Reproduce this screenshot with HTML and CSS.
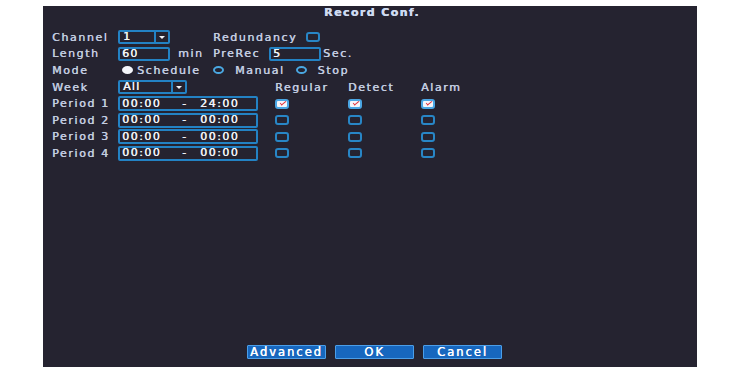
FILE: index.html
```html
<!DOCTYPE html>
<html lang="en">
<head>
    <meta charset="UTF-8">
    <meta name="viewport" content="width=device-width, initial-scale=1.0">
    <link rel="stylesheet" href="styles.css">
    <title>Record Conf.</title>
</head>
<body>
    <div class="panel">
        <div class="panel-title">Record Conf.</div>

        <div class="form-top">
            <div class="cell">Channel</div>
            <div class="cell">
                <div class="select select-channel">
                    <span class="select-value">1</span>
                    <span class="select-arrow"></span>
                </div>
            </div>
            <div class="cell">
                <span>Redundancy</span>
                <span class="check check-gap"></span>
            </div>

            <div class="cell">Length</div>
            <div class="cell">
                <div class="input input-short">60</div>
                <span class="unit-min">min</span>
            </div>
            <div class="cell">
                <span>PreRec</span>
                <div class="input input-short input-prerec">5</div>
                <span class="unit-sec">Sec.</span>
            </div>

            <div class="cell">Mode</div>
            <div class="cell">
                <span class="radio radio-on"></span>
                <span class="radio-label-tight">Schedule</span>
            </div>
            <div class="cell">
                <span class="radio"></span>
                <span class="radio-label">Manual</span>
                <span class="radio radio-next"></span>
                <span class="radio-label">Stop</span>
            </div>
        </div>

        <div class="form-periods">
            <div class="cell">Week</div>
            <div class="cell">
                <div class="select select-week">
                    <span class="select-value">All</span>
                    <span class="select-arrow"></span>
                </div>
            </div>
            <div class="cell">Regular</div>
            <div class="cell">Detect</div>
            <div class="cell">Alarm</div>

            <div class="cell">Period 1</div>
            <div class="cell">
                <div class="input input-period">
                    <span class="time-from">00:00</span><span class="time-dash">-</span><span>24:00</span>
                </div>
            </div>
            <div class="cell"><span class="check check-on"></span></div>
            <div class="cell"><span class="check check-on"></span></div>
            <div class="cell"><span class="check check-on"></span></div>

            <div class="cell">Period 2</div>
            <div class="cell">
                <div class="input input-period">
                    <span class="time-from">00:00</span><span class="time-dash">-</span><span>00:00</span>
                </div>
            </div>
            <div class="cell"><span class="check"></span></div>
            <div class="cell"><span class="check"></span></div>
            <div class="cell"><span class="check"></span></div>

            <div class="cell">Period 3</div>
            <div class="cell">
                <div class="input input-period">
                    <span class="time-from">00:00</span><span class="time-dash">-</span><span>00:00</span>
                </div>
            </div>
            <div class="cell"><span class="check"></span></div>
            <div class="cell"><span class="check"></span></div>
            <div class="cell"><span class="check"></span></div>

            <div class="cell">Period 4</div>
            <div class="cell">
                <div class="input input-period">
                    <span class="time-from">00:00</span><span class="time-dash">-</span><span>00:00</span>
                </div>
            </div>
            <div class="cell"><span class="check"></span></div>
            <div class="cell"><span class="check"></span></div>
            <div class="cell"><span class="check"></span></div>
        </div>

        <div class="panel-footer">
            <button class="btn">Advanced</button>
            <button class="btn">OK</button>
            <button class="btn">Cancel</button>
        </div>
    </div>
</body>
</html>
```

FILE: styles.css
```css
body {
    margin: 0;
    background-color: #ffffff;
    font-family: "DejaVu Sans", Verdana, sans-serif;
    font-size: 11px;
    letter-spacing: 1.6px;
    color: #c3cde0;
    text-shadow: 0.4px 0 0 currentColor;
}

.panel {
    display: flex;
    flex-direction: column;
    box-sizing: border-box;
    width: 654px;
    height: 361px;
    margin: 6px 0 0 43px;
    padding: 0 9px 8px 9px;
    background-color: #252330;
}

.panel-title {
    height: 14px;
    line-height: 14px;
    margin-bottom: 9px;
    padding-left: 4px;
    text-align: center;
    font-weight: bold;
    letter-spacing: 1.4px;
    color: #cfdbf0;
}

.form-top {
    display: grid;
    grid-template-columns: 66px 95px 1fr;
    grid-auto-rows: 16.6px;
}

.form-periods {
    display: grid;
    grid-template-columns: 66px 157px 73px 73px 73px;
    grid-auto-rows: 16.6px;
}

.cell {
    display: flex;
    align-items: center;
    white-space: nowrap;
}

/* inputs and selects */
.input,
.select {
    display: flex;
    align-items: center;
    box-sizing: border-box;
    height: 14px;
    border: 2px solid #2382c4;
    border-radius: 2px;
    color: #f2f4f8;
    line-height: 10px;
    letter-spacing: 1.2px;
}

.input {
    padding-left: 2px;
}

.input-short {
    width: 52px;
}

.input-prerec {
    margin-left: 9px;
}

.input-period {
    width: 140px;
    height: 15px;
    letter-spacing: 1.5px;
}

.time-from {
    width: 60px;
}

.time-dash {
    width: 18px;
}

.select-channel {
    width: 52px;
}

.select-week {
    width: 69px;
}

.select-value {
    flex: 1;
    padding-left: 3px;
}

.select-arrow {
    position: relative;
    width: 12px;
    height: 100%;
    border-left: 2px solid #2382c4;
}

.select-arrow::after {
    content: "";
    position: absolute;
    top: 4px;
    left: 3px;
    border-left: 3px solid transparent;
    border-right: 3px solid transparent;
    border-top: 3px solid #f2f4f8;
}

.unit-min {
    margin-left: 8px;
}

.unit-sec {
    margin-left: 2px;
}

/* checkboxes */
.check {
    position: relative;
    box-sizing: border-box;
    width: 14px;
    height: 10px;
    border: 2px solid #2886c6;
    border-radius: 3px;
}

.check-gap {
    margin-left: 9px;
}

.check-on {
    border-color: #4aa6e4;
    background-color: #f4f6fa;
}

.check-on::after {
    content: "";
    position: absolute;
    top: 0;
    left: 3px;
    width: 5px;
    height: 2px;
    border-left: 1.5px solid #e0303a;
    border-bottom: 1.5px solid #e0303a;
    transform: rotate(-40deg);
}

/* radios */
.radio {
    box-sizing: border-box;
    width: 11px;
    height: 8px;
    border: 2px solid #4aa8e2;
    border-radius: 50%;
}

.radio-on {
    margin-left: 4px;
    border-color: #f4f6fa;
    background-color: #f4f6fa;
}

.radio-label-tight {
    margin-left: 4px;
}

.radio-label {
    margin-left: 11px;
}

.radio-next {
    margin-left: 11px;
}

/* buttons */
.panel-footer {
    display: flex;
    justify-content: center;
    gap: 9px;
    margin-top: auto;
    padding-left: 9px;
}

.btn {
    box-sizing: border-box;
    width: 79px;
    height: 14px;
    padding: 0;
    border: 1px solid #4b9ee8;
    border-radius: 1px;
    background-color: #1767be;
    color: #ffffff;
    font-family: inherit;
    font-size: 11.5px;
    letter-spacing: 2px;
    line-height: 12px;
    text-shadow: 0.4px 0 0 currentColor;
}
```
